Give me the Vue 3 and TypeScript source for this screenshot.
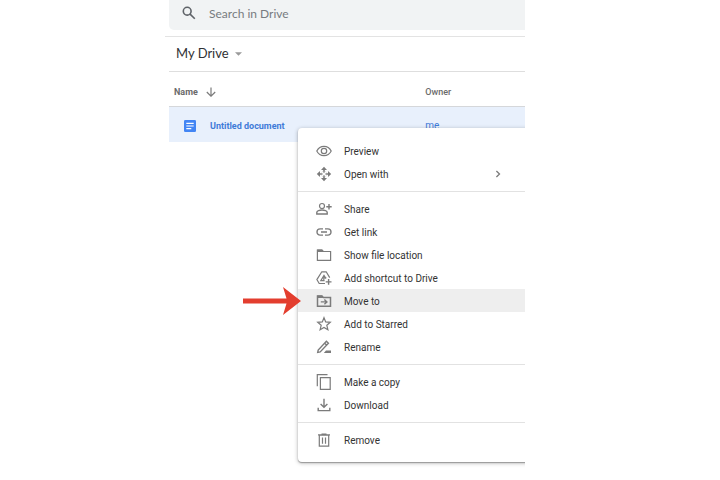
<script setup lang="ts">
import { ref } from 'vue'

type IconName =
  | 'preview' | 'open' | 'share' | 'link' | 'folder' | 'shortcut'
  | 'move' | 'star' | 'rename' | 'copy' | 'download' | 'remove'

interface MenuEntry {
  icon: IconName
  label: string
  submenu?: boolean
  active?: boolean
}

const query = ref('')

const groups: MenuEntry[][] = [
  [
    { icon: 'preview', label: 'Preview' },
    { icon: 'open', label: 'Open with', submenu: true },
  ],
  [
    { icon: 'share', label: 'Share' },
    { icon: 'link', label: 'Get link' },
    { icon: 'folder', label: 'Show file location' },
    { icon: 'shortcut', label: 'Add shortcut to Drive' },
    { icon: 'move', label: 'Move to', active: true },
    { icon: 'star', label: 'Add to Starred' },
    { icon: 'rename', label: 'Rename' },
  ],
  [
    { icon: 'copy', label: 'Make a copy' },
    { icon: 'download', label: 'Download' },
  ],
  [{ icon: 'remove', label: 'Remove' }],
]
</script>

<template>
  <div class="page">
    <main class="drive">
      <label class="search">
        <svg class="search-icon" viewBox="0 0 14 14" aria-hidden="true">
          <circle cx="5.2" cy="5.2" r="3.9" />
          <path d="M8.1 8.1 12.8 12.8" />
        </svg>
        <input v-model="query" type="search" placeholder="Search in Drive" aria-label="Search in Drive" />
      </label>

      <div class="crumbs">
        <button type="button" class="crumb">
          My Drive
          <svg class="caret" viewBox="0 0 8 4" aria-hidden="true"><path d="M0 0h8L4 4z" /></svg>
        </button>
      </div>

      <table class="files">
        <thead>
          <tr>
            <th class="name-col" scope="col">
              <span class="sort">
                Name
                <svg class="sort-icon" viewBox="0 0 10 10" aria-hidden="true">
                  <path d="M5 .5v8.6M.8 5 5 9.2 9.2 5" />
                </svg>
              </span>
            </th>
            <th class="owner-col" scope="col">Owner</th>
          </tr>
        </thead>
        <tbody>
          <tr>
            <td>
              <a href="#" class="file">
                <svg class="doc-icon" viewBox="0 0 12 12" aria-hidden="true">
                  <rect width="12" height="12" rx="1.3" fill="#4285f4" />
                  <path d="M2.3 3.4h7.4M2.3 6h7.4M2.3 8.6h5" stroke="#fff" stroke-width="1.1" />
                </svg>
                Untitled document
              </a>
            </td>
            <td class="owner">me</td>
          </tr>
        </tbody>
      </table>

      <div class="menu" role="menu">
        <div v-for="(group, g) in groups" :key="g" class="group" role="group">
          <button
            v-for="entry in group"
            :key="entry.label"
            type="button"
            role="menuitem"
            class="entry"
            :class="{ active: entry.active }"
          >
            <svg class="icon" viewBox="0 0 16 16" aria-hidden="true">
              <template v-if="entry.icon === 'preview'">
                <path d="M.8 8C2.3 5 4.9 3.3 8 3.3S13.7 5 15.2 8c-1.5 3-4.1 4.7-7.2 4.7S2.3 11 .8 8z" />
                <circle cx="8" cy="8" r="2.7" />
              </template>
              <template v-else-if="entry.icon === 'open'">
                <path d="M8 2.5v2.6M8 10.9v2.6M2.5 8h2.6M10.9 8h2.6" stroke-width="1.6" />
                <path class="solid" d="M8 .8 11 4H5zM8 15.2 5 12h6zM.8 8 4 5v6zM15.2 8 12 11V5z" />
                <path class="solid" d="M8 6.9 6.4 5.3h3.2zM8 9.1l1.6 1.6H6.4zM6.9 8 5.3 9.6V6.4zM9.1 8l1.6-1.6v3.2z" />
              </template>
              <template v-else-if="entry.icon === 'share'">
                <circle cx="6" cy="5" r="2.5" />
                <path d="M.8 13v-1.4c0-1.7 3-2.6 5.2-2.6s5.2.9 5.2 2.6V13zM13 3v5.4M10.3 5.7h5.4" stroke-width="1.4" />
              </template>
              <template v-else-if="entry.icon === 'link'">
                <path d="M7 4.9H4.1a3.1 3.1 0 0 0 0 6.2H7M9 4.9h2.9a3.1 3.1 0 0 1 0 6.2H9M5 8h6" stroke-width="1.4" />
              </template>
              <template v-else-if="entry.icon === 'folder'">
                <path d="M1.4 3.1h4.6l1.4 1.4h7.2v8.9H1.4z" />
                <path class="solid" d="M1.2 2.6h4.9l1.6 2.5H1.2z" />
              </template>
              <template v-else-if="entry.icon === 'shortcut'">
                <path d="M9 13.5H3.2L.9 9.6 5.8 1.8h4.4l3.5 5.8M8.6 10.7H4.8L8 5.4l2 3.2M7.8 10.7V7.9h2.6" />
                <path d="M12.6 9v5.8M9.7 11.9h5.8" stroke-width="1.4" />
              </template>
              <template v-else-if="entry.icon === 'move'">
                <path d="M1.5 3.1h4.5l1.4 1.4h7.1v8.8h-13z" stroke-width="1.5" />
                <path class="solid" d="M1.2 2.4H6l1.6 2.6H1.2z" />
                <path d="M4.8 8.9h6M8.4 6.6l2.5 2.3-2.5 2.3" stroke-width="1.4" />
              </template>
              <template v-else-if="entry.icon === 'star'">
                <path d="m8 1.7 1.7 4.2 4.6.4-3.5 3 1.1 4.5L8 11.4l-3.9 2.4 1.1-4.5-3.5-3 4.6-.4z" />
              </template>
              <template v-else-if="entry.icon === 'rename'">
                <path d="M1.7 13.3 2.2 11l8.2-8.7 2 1.9-8.2 8.7zM8.6 4.2l2 1.9" stroke-width="1.4" />
                <path class="solid" d="M10 11.6h5v2.4H7.8z" />
              </template>
              <template v-else-if="entry.icon === 'copy'">
                <path d="M4.4 3.7h9.8v11.6H4.4zM1.3 12.2V.7h10.2" />
              </template>
              <template v-else-if="entry.icon === 'download'">
                <path d="M8 1.8v8.1M4.6 7 8 10.2 11.4 7M2.2 10.7v2.9h11.6v-2.9" stroke-width="1.4" />
              </template>
              <template v-else>
                <path d="M3.3 3.1h9.4v11.1H3.3zM2 2.9h12M5.5 2h5M6.5 5.6v6.2M9.5 5.6v6.2" />
              </template>
            </svg>
            <span class="text">{{ entry.label }}</span>
            <svg v-if="entry.submenu" class="chevron" viewBox="0 0 6 8" aria-hidden="true">
              <path d="M1.4 1 4.5 4 1.4 7" />
            </svg>
          </button>
        </div>
      </div>

      <svg class="pointer" viewBox="0 0 58 28" aria-hidden="true">
        <path d="M0 11.5h43.5L40 0 58 14 40 28l3.5-11.5H0z" />
      </svg>
    </main>
  </div>
</template>

<style>
body {
  margin: 0;
  background: #fff;
}
</style>

<style scoped>
.page {
  display: grid;
  grid-template-columns: 165fr 360fr 195fr;
  font-family: Roboto, "Liberation Sans", sans-serif;
  color: #3c4043;
}

.drive {
  grid-column: 2;
  position: relative;
  padding-bottom: 330px;
  overflow: hidden;
}

button,
input {
  font: inherit;
  color: inherit;
  border: 0;
  margin: 0;
  padding: 0;
  background: none;
}

svg {
  flex: none;
  fill: none;
  stroke: #7b7b7b;
}

.search {
  display: flex;
  align-items: center;
  gap: 13px;
  height: 26px;
  margin-left: 4px;
  padding: 0 0 4px 13px;
  border-radius: 0 0 0 5px;
  background: #f1f3f4;
}

.search-icon {
  width: 14px;
  height: 14px;
  stroke: #5f6368;
  stroke-width: 1.6;
}

.search input {
  flex: 1;
  min-width: 0;
  font-family: Lato, sans-serif;
  font-size: 12px;
  outline: none;
}

.search input::placeholder {
  color: #777b7f;
  opacity: 1;
}

.crumbs {
  display: flex;
  align-items: center;
  height: 32px;
  margin-top: 6px;
  padding: 0 0 2px 11px;
  border-top: 1px solid #e3e3e3;
}

.crumb {
  display: flex;
  align-items: center;
  gap: 6px;
  font-family: Lato, sans-serif;
  font-size: 13px;
  color: #303134;
}

.caret {
  width: 7px;
  height: 4px;
  margin-top: 2px;
  fill: #9a9a9a;
  stroke: none;
}

.files {
  width: calc(100% - 4px);
  margin-left: 4px;
  border-collapse: separate;
  border-spacing: 0;
  table-layout: fixed;
  font-size: 10px;
  text-align: left;
}

.files th {
  height: 36px;
  padding: 6px 0 0;
  box-sizing: border-box;
  border-top: 1px solid #dedede;
  border-bottom: 1px solid #d5d7da;
  font-size: 9px;
  font-weight: 500;
  color: #6b6b6b;
}

.files .name-col {
  width: 72%;
  padding-left: 5px;
  font-weight: 700;
}

.sort {
  display: flex;
  align-items: center;
  gap: 8px;
}

.sort-icon {
  width: 10px;
  height: 10px;
  stroke-width: 1.2;
}

.files td {
  height: 35px;
  padding: 2px 0 0;
  box-sizing: border-box;
  background: #e8f0fc;
  color: #3f7bd8;
}

.file {
  display: flex;
  align-items: center;
  gap: 14px;
  padding-left: 15px;
  font-size: 9px;
  font-weight: 700;
  color: inherit;
  text-decoration: none;
}

.doc-icon {
  width: 12px;
  height: 12px;
  stroke: none;
}

.menu {
  position: absolute;
  top: 128px;
  left: 133px;
  right: -8px;
  padding: 11px 8px 11px 0;
  border-radius: 4px;
  background: #fff;
  box-shadow: 0 1px 1px #999, 0 1px 4px rgba(0, 0, 0, 0.3);
}

.group + .group {
  margin-top: 6px;
  padding-top: 5px;
  border-top: 1px solid #e2e2e2;
}

.entry {
  display: flex;
  align-items: center;
  width: 100%;
  height: 23px;
  padding: 0 24px 0 18px;
  font-size: 10px;
  line-height: 12px;
  color: #333;
  text-align: left;
}

.entry.active {
  background: #eee;
}

.icon {
  width: 16px;
  height: 16px;
  margin-right: 12px;
  stroke-width: 1.2;
}

.icon .solid {
  fill: #7b7b7b;
  stroke: none;
}

.text {
  flex: 1;
  padding-top: 2px;
}

.chevron {
  width: 6px;
  height: 8px;
  stroke-width: 1.3;
}

.pointer {
  position: absolute;
  top: 287px;
  left: 78px;
  width: 58px;
  height: 28px;
  fill: #e33e2f;
  stroke: none;
}
</style>
